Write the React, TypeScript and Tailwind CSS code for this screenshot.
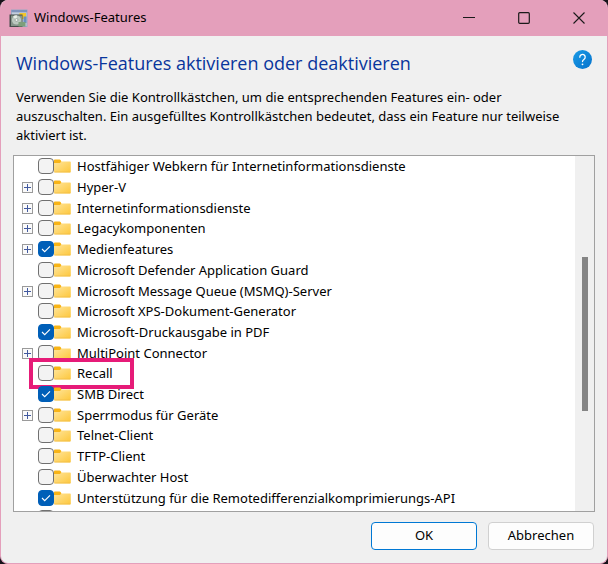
import { useState } from 'react';

type Feature = {
  name: string;
  expandable?: boolean;
  checked?: boolean;
  highlighted?: boolean;
};

const features: Feature[] = [
  { name: 'Hostfähiger Webkern für Internetinformationsdienste' },
  { name: 'Hyper-V', expandable: true },
  { name: 'Internetinformationsdienste', expandable: true },
  { name: 'Legacykomponenten', expandable: true },
  { name: 'Medienfeatures', expandable: true, checked: true },
  { name: 'Microsoft Defender Application Guard' },
  { name: 'Microsoft Message Queue (MSMQ)-Server', expandable: true },
  { name: 'Microsoft XPS-Dokument-Generator' },
  { name: 'Microsoft-Druckausgabe in PDF', checked: true },
  { name: 'MultiPoint Connector', expandable: true },
  { name: 'Recall', highlighted: true },
  { name: 'SMB Direct', checked: true },
  { name: 'Sperrmodus für Geräte', expandable: true },
  { name: 'Telnet-Client' },
  { name: 'TFTP-Client' },
  { name: 'Überwachter Host' },
  { name: 'Unterstützung für die Remotedifferenzialkomprimierungs-API', checked: true },
];

function AppIcon() {
  return (
    <svg width="19" height="19" viewBox="0 0 19 19" aria-hidden="true">
      <path d="M2 .5h16.500V18H2z" fill="#98a9c4" />
      <path d="M2.500 1h15.500v2H2.500z" fill="#7d93bd" />
      <path d="M3 3.500h14.500V17H3z" fill="#c3cede" />
      <path d="M10.500 4H17v6h-6.500z" fill="#f2c62c" />
      <path d="M14.500 7.500h3V14h-3z" fill="#6a8fc0" />
      <path d="M.5 5.500h13v12.500H.5z" fill="#454d4a" />
      <path d="M2 6.500h11V17H2z" fill="#86958a" />
      <circle cx="7.500" cy="11" r="4.600" fill="#bcc8bf" />
      <path d="M7.500 11L4 7.800A4.600 4.600 0 0 1 8 6.400z" fill="#e9efe9" />
      <circle cx="7.500" cy="11" r="1.500" fill="#eef2ee" stroke="#7d8b84" strokeWidth=".6" />
      <path d="M9.500 13h7v4.500h-7z" fill="#7d9f7b" />
    </svg>
  );
}

function FolderIcon() {
  return (
    <svg width="17" height="14" viewBox="0 0 17 14" className="shrink-0" aria-hidden="true">
      <defs>
        <linearGradient id="folder" x1="0" y1="0" x2="1" y2="1">
          <stop offset="0" stopColor="#ffe59b" />
          <stop offset="1" stopColor="#fdc73c" />
        </linearGradient>
      </defs>
      <path d="M0 1.400Q0 .6.8.6h4.800q.6 0 1 .5L7.500 2.400 6.200 4.500H0z" fill="#f8b416" />
      <path d="M0 4.200h5.600q.5 0 .9-.5L7.600 2.400H16q.8 0 .8.800v9.400q0 .8-.8.800H.8q-.8 0-.8-.8z" fill="url(#folder)" />
      <path d="M.3 13h16.200" stroke="#efbb48" strokeWidth=".7" />
    </svg>
  );
}

function FeatureRow({ feature }: { feature: Feature }) {
  const [checked, setChecked] = useState(Boolean(feature.checked));

  return (
    <li className="relative flex min-h-0 flex-1 items-center pl-2">
      <span className="flex w-4 shrink-0">
        {feature.expandable && (
          <button
            type="button"
            aria-label={`${feature.name} erweitern`}
            className="mt-px flex size-[11px] items-center justify-center border border-[#9a9a9a] bg-[#fafafa]"
          >
            <svg width="7" height="7" viewBox="0 0 7 7" aria-hidden="true">
              <path d="M0 3.500h7M3.500 0v7" stroke="#41599f" />
            </svg>
          </button>
        )}
      </span>
      <label className="flex items-center whitespace-nowrap">
        <span className="grid shrink-0 place-items-center">
          <input
            type="checkbox"
            checked={checked}
            onChange={(e) => setChecked(e.target.checked)}
            className="col-start-1 row-start-1 size-4 appearance-none rounded-[4px] border border-[#707070] bg-[#f3f3f3] checked:border-[#005fb8] checked:bg-[#005fb8]"
          />
          {checked && (
            <svg width="10" height="8" viewBox="0 0 10 8" className="pointer-events-none col-start-1 row-start-1">
              <path d="M1 4l2.700 2.700L9 1.300" fill="none" stroke="#fff" strokeWidth="1.100" />
            </svg>
          )}
        </span>
        <FolderIcon />
        <span className="ml-1.5">{feature.name}</span>
      </label>
      {feature.highlighted && (
        <span className="pointer-events-none absolute -inset-y-[5px] left-[15px] w-[105px] border-4 border-[#e61b78]" />
      )}
    </li>
  );
}

export default function App() {
  return (
    <div className="min-h-screen bg-[#17131a] font-['Noto_Sans',sans-serif] text-[13px] text-black">
      <div className="flex min-h-screen flex-col overflow-hidden rounded-lg border-x border-b border-[#e49fbb] bg-[#f0f0f0]">
        <header className="flex h-9 shrink-0 items-center bg-[#e49fbb] pl-2">
          <AppIcon />
          <span className="ml-1.5 flex-1">Windows-Features</span>
          <button type="button" aria-label="Minimieren" className="flex h-full w-[55px] items-center justify-center">
            <svg width="12" height="12" viewBox="0 0 12 12" aria-hidden="true">
              <path d="M0 5.500h12" stroke="#1a1a1a" />
            </svg>
          </button>
          <button type="button" aria-label="Maximieren" className="flex h-full w-[55px] items-center justify-center">
            <svg width="12" height="12" viewBox="0 0 12 12" aria-hidden="true">
              <rect x=".7" y=".7" width="10.600" height="10.600" rx="1" fill="none" stroke="#1a1a1a" strokeWidth="1.200" />
            </svg>
          </button>
          <button type="button" aria-label="Schließen" className="flex h-full w-[56px] items-center justify-center">
            <svg width="12" height="12" viewBox="0 0 12 12" aria-hidden="true">
              <path d="M.5.5l11 11M11.500.5l-11 11" stroke="#1a1a1a" strokeWidth="1.100" />
            </svg>
          </button>
        </header>

        <main className="flex flex-1 flex-col px-3 pb-[13px]">
          <div className="flex items-start justify-between pt-3.5 pr-[3px] pl-[3px]">
            <h1 className="font-['Open_Sans','Noto_Sans',sans-serif] text-[18px] leading-[26px] text-[#08359c]">
              Windows-Features aktivieren oder deaktivieren
            </h1>
            <button type="button" aria-label="Hilfe" className="rounded-full">
              <svg width="19" height="19" viewBox="0 0 19 19" aria-hidden="true">
                <defs>
                  <linearGradient id="help" x1="0" y1="0" x2="1" y2="1">
                    <stop offset="0" stopColor="#1a9be6" />
                    <stop offset="1" stopColor="#0672cc" />
                  </linearGradient>
                </defs>
                <circle cx="9.500" cy="9.500" r="9.500" fill="url(#help)" />
                <path
                  d="M6.800 7.200a2.700 2.700 0 1 1 4.300 2.100c-1 .8-1.600 1.200-1.600 2.300"
                  fill="none"
                  stroke="#fff"
                  strokeWidth="1.300"
                  strokeLinecap="round"
                />
                <circle cx="9.500" cy="14.300" r=".9" fill="#fff" />
              </svg>
            </button>
          </div>

          <p className="mt-3 pl-[3px] leading-[19px]">
            Verwenden Sie die Kontrollkästchen, um die entsprechenden Features ein- oder
            <br />
            auszuschalten. Ein ausgefülltes Kontrollkästchen bedeutet, dass ein Feature nur teilweise
            <br />
            aktiviert ist.
          </p>

          <div className="mt-[10px] flex flex-1 border border-[#a0a0a0] bg-white">
            <ul className="flex min-w-0 flex-1 flex-col leading-5">
              {features.map((feature) => (
                <FeatureRow key={feature.name} feature={feature} />
              ))}
              {/* next row, only its top edge is scrolled into view */}
              <li className="h-[3px] overflow-hidden pt-0.5 pl-6" aria-hidden="true">
                <span className="block size-4 rounded-[4px] border border-[#707070] bg-[#f3f3f3]" />
              </li>
            </ul>
            <div className="flex w-[19px] flex-col items-center bg-[#f0f0f0]">
              <div className="mt-[101px] h-[154px] w-1.5 bg-[#858585]" />
            </div>
          </div>

          <div className="mt-[10px] flex justify-end gap-[11px] pr-px">
            <button type="button" className="h-7 w-[106px] rounded-[4px] border border-[#0078d4] bg-[#fdfdfd]">
              OK
            </button>
            <button type="button" className="h-7 w-[106px] rounded-[4px] border border-[#d0d0d0] bg-[#fdfdfd]">
              Abbrechen
            </button>
          </div>
        </main>
      </div>
    </div>
  );
}
